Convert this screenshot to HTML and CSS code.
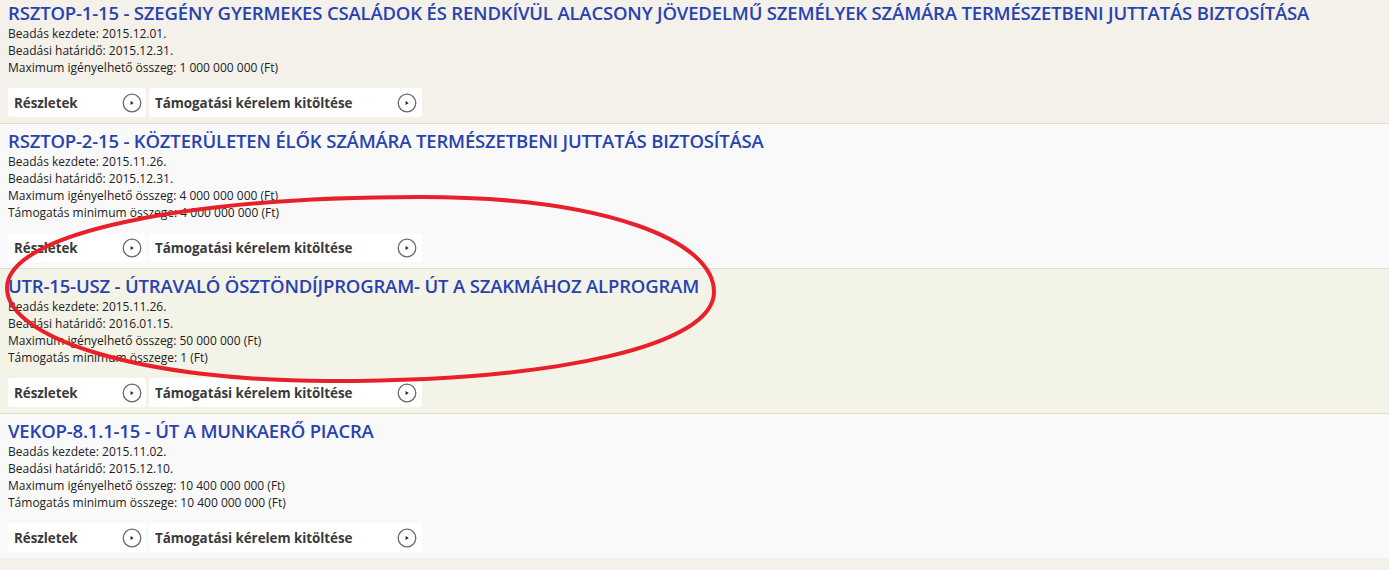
FILE: index.html
```html
<!DOCTYPE html>
<html lang="hu">
<head>
<meta charset="utf-8">
<title>Pályázatok</title>
<link rel="stylesheet" href="styles.css">
</head>
<body>
<div class="page">
  <div class="grant grant--beige grant--first">
    <h2 class="grant__title">RSZTOP-1-15 - SZEGÉNY GYERMEKES CSALÁDOK ÉS RENDKÍVÜL ALACSONY JÖVEDELMŰ SZEMÉLYEK SZÁMÁRA TERMÉSZETBENI JUTTATÁS BIZTOSÍTÁSA</h2>
    <div class="grant__info">
      <div>Beadás kezdete: 2015.12.01.</div>
      <div>Beadási határidő: 2015.12.31.</div>
      <div>Maximum igényelhető összeg: 1 000 000 000 (Ft)</div>
    </div>
    <div class="grant__actions">
      <a class="btn btn--details">Részletek<svg class="btn__icon" viewBox="0 0 20 20"><circle cx="10" cy="10" r="8.8"/><path d="M8.6 7.9 L11.7 10 L8.6 12.1 Z"/></svg></a>
      <a class="btn btn--apply">Támogatási kérelem kitöltése<svg class="btn__icon" viewBox="0 0 20 20"><circle cx="10" cy="10" r="8.8"/><path d="M8.6 7.9 L11.7 10 L8.6 12.1 Z"/></svg></a>
    </div>
  </div>

  <div class="grant grant--light">
    <h2 class="grant__title">RSZTOP-2-15 - KÖZTERÜLETEN ÉLŐK SZÁMÁRA TERMÉSZETBENI JUTTATÁS BIZTOSÍTÁSA</h2>
    <div class="grant__info">
      <div>Beadás kezdete: 2015.11.26.</div>
      <div>Beadási határidő: 2015.12.31.</div>
      <div>Maximum igényelhető összeg: 4 000 000 000 (Ft)</div>
      <div>Támogatás minimum összege: 4 000 000 000 (Ft)</div>
    </div>
    <div class="grant__actions">
      <a class="btn btn--details">Részletek<svg class="btn__icon" viewBox="0 0 20 20"><circle cx="10" cy="10" r="8.8"/><path d="M8.6 7.9 L11.7 10 L8.6 12.1 Z"/></svg></a>
      <a class="btn btn--apply">Támogatási kérelem kitöltése<svg class="btn__icon" viewBox="0 0 20 20"><circle cx="10" cy="10" r="8.8"/><path d="M8.6 7.9 L11.7 10 L8.6 12.1 Z"/></svg></a>
    </div>
  </div>

  <div class="grant grant--beige grant--alt">
    <h2 class="grant__title">UTR-15-USZ - ÚTRAVALÓ ÖSZTÖNDÍJPROGRAM- ÚT A SZAKMÁHOZ ALPROGRAM</h2>
    <div class="grant__info">
      <div>Beadás kezdete: 2015.11.26.</div>
      <div>Beadási határidő: 2016.01.15.</div>
      <div>Maximum igényelhető összeg: 50 000 000 (Ft)</div>
      <div>Támogatás minimum összege: 1 (Ft)</div>
    </div>
    <div class="grant__actions">
      <a class="btn btn--details">Részletek<svg class="btn__icon" viewBox="0 0 20 20"><circle cx="10" cy="10" r="8.8"/><path d="M8.6 7.9 L11.7 10 L8.6 12.1 Z"/></svg></a>
      <a class="btn btn--apply">Támogatási kérelem kitöltése<svg class="btn__icon" viewBox="0 0 20 20"><circle cx="10" cy="10" r="8.8"/><path d="M8.6 7.9 L11.7 10 L8.6 12.1 Z"/></svg></a>
    </div>
  </div>

  <div class="grant grant--light grant--last">
    <h2 class="grant__title">VEKOP-8.1.1-15 - ÚT A MUNKAERŐ PIACRA</h2>
    <div class="grant__info">
      <div>Beadás kezdete: 2015.11.02.</div>
      <div>Beadási határidő: 2015.12.10.</div>
      <div>Maximum igényelhető összeg: 10 400 000 000 (Ft)</div>
      <div>Támogatás minimum összege: 10 400 000 000 (Ft)</div>
    </div>
    <div class="grant__actions">
      <a class="btn btn--details">Részletek<svg class="btn__icon" viewBox="0 0 20 20"><circle cx="10" cy="10" r="8.8"/><path d="M8.6 7.9 L11.7 10 L8.6 12.1 Z"/></svg></a>
      <a class="btn btn--apply">Támogatási kérelem kitöltése<svg class="btn__icon" viewBox="0 0 20 20"><circle cx="10" cy="10" r="8.8"/><path d="M8.6 7.9 L11.7 10 L8.6 12.1 Z"/></svg></a>
    </div>
  </div>

  <svg class="annotation" viewBox="0 0 1389 570" width="1389" height="570">
    <path d="M7 288 C 7 232 190 197 420 197 C 610 197 714 242 714 292 C 714 345 560 381 330 381 C 140 381 7 338 7 288 Z"/>
  </svg>
</div>
</body>
</html>
```

FILE: styles.css
```css
html, body {
  margin: 0;
  padding: 0;
}

body {
  background: #f3f1ea;
  font-family: "Open Sans", "Noto Sans", "Liberation Sans", sans-serif;
  color: #222;
  width: 1389px;
  height: 570px;
  overflow: hidden;
}

.page {
  position: relative;
}

.grant {
  padding: 5px 0 6px 8px;
  border-bottom: 1px solid #e4dbc4;
}

.grant--first {
  padding-top: 1px;
}

.grant--beige {
  background: #f4f1ea;
  border-bottom-color: #e6dcc3;
}

.grant--alt {
  background: #f4f3e8;
}

.grant--light {
  background: #f9f9f9;
  border-bottom-color: #dcdcdc;
}

.grant--last {
  border-bottom: none;
}

.grant__title {
  margin: 0;
  font-size: 18.5px;
  letter-spacing: -0.17px;
  line-height: 24px;
  font-weight: 600;
  color: #2842b0;
  white-space: nowrap;
}

.grant__info {
  font-size: 12px;
  line-height: 17px;
  color: #222;
}

.grant__actions {
  display: flex;
  gap: 3px;
  margin-top: 12px;
}

.btn {
  display: flex;
  align-items: center;
  justify-content: space-between;
  box-sizing: border-box;
  height: 29px;
  padding: 0 4px 0 6px;
  background: #fff;
  border-radius: 3px;
  font-size: 13.4px;
  letter-spacing: -0.05px;
  font-weight: 700;
  color: #3a3a3a;
  text-decoration: none;
}

.btn--details {
  width: 138px;
}

.btn--apply {
  width: 273px;
  padding-right: 5px;
}

.btn__icon {
  width: 20px;
  height: 20px;
  flex: none;
}

.btn__icon circle {
  fill: #fff;
  stroke: #6a6a6a;
  stroke-width: 1.3;
}

.btn__icon path {
  fill: #222;
}

.annotation {
  position: absolute;
  left: 0;
  top: 0;
  pointer-events: none;
}

.annotation path {
  fill: none;
  stroke: #e8202a;
  stroke-width: 4;
}
```
